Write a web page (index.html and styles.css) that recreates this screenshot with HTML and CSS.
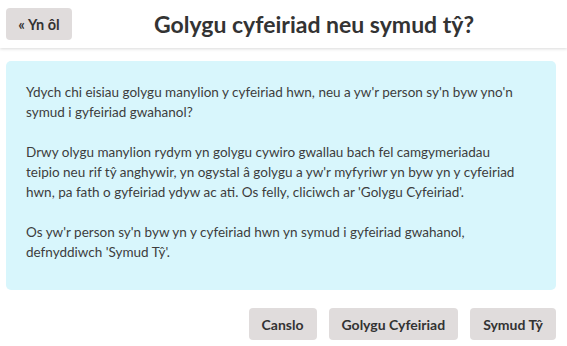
FILE: index.html
```html
<!DOCTYPE html>
<html lang="cy">
<head>
  <meta charset="UTF-8">
  <title>Golygu cyfeiriad neu symud tŷ?</title>
  <link rel="stylesheet" href="styles.css">
</head>
<body>
  <div class="header">
    <button class="back">« Yn ôl</button>
    <h1 class="title">Golygu cyfeiriad neu symud tŷ?</h1>
  </div>
  <div class="content">
    <div class="info">
      <p>Ydych chi eisiau golygu manylion y cyfeiriad hwn, neu a yw'r person sy'n byw yno'n symud i gyfeiriad gwahanol?</p>
      <p>Drwy olygu manylion rydym yn golygu cywiro gwallau bach fel camgymeriadau teipio neu rif tŷ anghywir, yn ogystal â golygu a yw'r myfyriwr yn byw yn y cyfeiriad hwn, pa fath o gyfeiriad ydyw ac ati. Os felly, cliciwch ar 'Golygu Cyfeiriad'.</p>
      <p>Os yw'r person sy'n byw yn y cyfeiriad hwn yn symud i gyfeiriad gwahanol, defnyddiwch 'Symud Tŷ'.</p>
    </div>
    <div class="actions">
      <button class="btn">Canslo</button>
      <button class="btn">Golygu Cyfeiriad</button>
      <button class="btn">Symud Tŷ</button>
    </div>
  </div>
</body>
</html>
```
FILE: styles.css
```css
body {
  margin: 0;
  background: #fff;
  color: #3d3d3d;
  font-family: Lato, "Open Sans", sans-serif;
}
button {
  font-family: inherit;
  border: none;
  border-radius: 4px;
  background: #e0dcdc;
  color: #333;
  cursor: pointer;
}
.header {
  display: flex;
  align-items: center;
  height: 48px;
  padding: 0 11px 0 6px;
  box-shadow: 0 1px 3px rgba(0,0,0,0.15);
}
.back {
  width: 66px;
  height: 32px;
  font-size: 14.5px;
  font-weight: bold;
  padding: 0;
}
.title {
  flex: 1;
  margin: 0;
  text-align: center;
  font-size: 23px;
  font-weight: bold;
  color: #333;
}
.content {
  padding: 13px 11px 0 6px;
}
.info {
  background: #d8f6fc;
  border-radius: 5px;
  padding: 21px 31px 28px 20px;
  font-size: 13.5px;
  line-height: 20px;
}
.info p {
  margin: 0 0 20px;
}
.info p:last-child {
  margin-bottom: 0;
}
.actions {
  display: flex;
  justify-content: flex-end;
  gap: 12px;
  margin-top: 18px;
}
.btn {
  height: 32px;
  padding: 0 13px;
  font-size: 14px;
  font-weight: bold;
}
```
